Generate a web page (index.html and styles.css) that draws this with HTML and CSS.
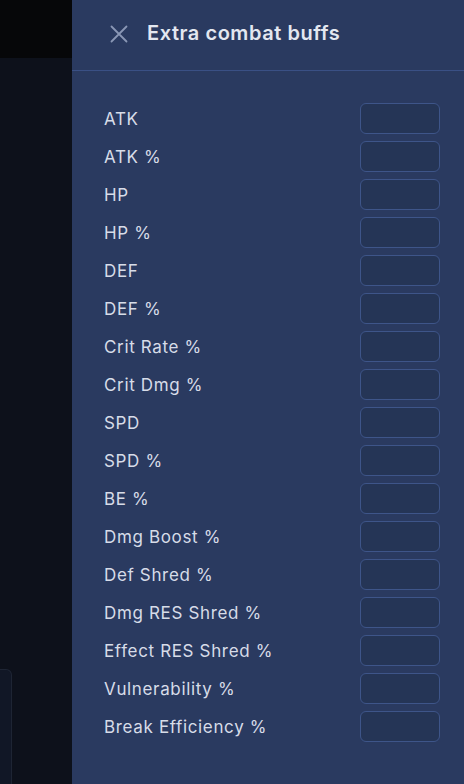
FILE: index.html
```html
<!DOCTYPE html>
<html>
<head>
<meta charset="utf-8">
<link rel="stylesheet" href="styles.css">
</head>
<body>
<div class="app">
  <div class="backdrop">
    <div class="topbar"></div>
    <div class="main">
      <div class="card"></div>
    </div>
  </div>
  <aside class="drawer">
    <header class="drawer-head">
      <svg class="close" width="18" height="18" viewBox="0 0 18 18"><path d="M1.5 1.5 L16.5 16.5 M16.5 1.5 L1.5 16.5" stroke="#8a97b5" stroke-width="1.8" stroke-linecap="round" fill="none"/></svg>
      <h1 class="title">Extra combat buffs</h1>
    </header>
    <div class="rows">
      <div class="row"><span class="label">ATK</span><input class="field" type="text"></div>
      <div class="row"><span class="label">ATK %</span><input class="field" type="text"></div>
      <div class="row"><span class="label">HP</span><input class="field" type="text"></div>
      <div class="row"><span class="label">HP %</span><input class="field" type="text"></div>
      <div class="row"><span class="label">DEF</span><input class="field" type="text"></div>
      <div class="row"><span class="label">DEF %</span><input class="field" type="text"></div>
      <div class="row"><span class="label">Crit Rate %</span><input class="field" type="text"></div>
      <div class="row"><span class="label">Crit Dmg %</span><input class="field" type="text"></div>
      <div class="row"><span class="label">SPD</span><input class="field" type="text"></div>
      <div class="row"><span class="label">SPD %</span><input class="field" type="text"></div>
      <div class="row"><span class="label">BE %</span><input class="field" type="text"></div>
      <div class="row"><span class="label">Dmg Boost %</span><input class="field" type="text"></div>
      <div class="row"><span class="label">Def Shred %</span><input class="field" type="text"></div>
      <div class="row"><span class="label">Dmg RES Shred %</span><input class="field" type="text"></div>
      <div class="row"><span class="label">Effect RES Shred %</span><input class="field" type="text"></div>
      <div class="row"><span class="label">Vulnerability %</span><input class="field" type="text"></div>
      <div class="row"><span class="label">Break Efficiency %</span><input class="field" type="text"></div>
    </div>
  </aside>
</div>
</body>
</html>
```
FILE: styles.css
```css
* { box-sizing: border-box; }
html, body { margin: 0; padding: 0; }
body {
  width: 464px;
  height: 784px;
  overflow: hidden;
  font-family: Inter, "Noto Sans", sans-serif;
  background: #0d111a;
}
.app {
  display: flex;
  width: 464px;
  height: 784px;
}
.backdrop {
  width: 72px;
  flex: none;
  display: flex;
  flex-direction: column;
  overflow: hidden;
}
.topbar {
  flex: none;
  height: 58px;
  background: #060709;
}
.main {
  flex: 1;
  min-height: 0;
  overflow: hidden;
  background: #0d111b;
  padding-top: 611px;
}
.card {
  width: 12px;
  height: 120px;
  border: 1px solid #1e2534;
  border-left: none;
  border-radius: 0 6px 0 0;
  background: #111726;
}
.drawer {
  flex: 1;
  background: #2a3a60;
  display: flex;
  flex-direction: column;
}
.drawer-head {
  flex: none;
  height: 71px;
  border-bottom: 1px solid #3a5085;
  display: flex;
  align-items: center;
  padding: 0 0 4px 38px;
  gap: 19px;
}
.close { flex: none; margin-top: 1px; }
.title {
  margin: 0;
  font-size: 20px;
  font-weight: 600;
  color: #e3e7f0;
  letter-spacing: 0.55px;
}
.rows {
  display: flex;
  flex-direction: column;
  gap: 7px;
  padding: 32px 24px 0 32px;
}
.row {
  height: 31px;
  display: flex;
  align-items: center;
  justify-content: space-between;
}
.label {
  font-size: 17px;
  color: #d7dce8;
  letter-spacing: 0.65px;
}
.field {
  width: 80px;
  height: 31px;
  margin: 0;
  padding: 0 8px;
  background: #253556;
  border: 1px solid #3e5589;
  border-radius: 6px;
  outline: none;
  color: #e3e7f0;
  font: inherit;
}
```
